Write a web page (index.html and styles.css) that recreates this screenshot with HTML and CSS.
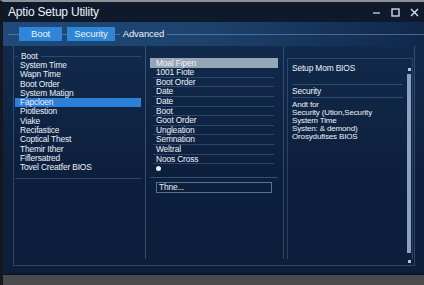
FILE: index.html
```html
<!DOCTYPE html>
<html lang="en">
<head>
    <meta charset="UTF-8">
    <title>Aptio Setup Utility</title>
    <link rel="stylesheet" href="styles.css">
</head>
<body>
    <div class="window">
        <div class="titlebar">
            <span class="title">Aptio Setup Utility</span>
            <div class="controls">
                <svg width="9" height="9" viewBox="0 0 9 9"><line x1="1" y1="5" x2="8" y2="5" stroke="#dfe6ee" stroke-width="1.2"/></svg>
                <svg width="9" height="9" viewBox="0 0 9 9"><rect x="1" y="1" width="7" height="7" fill="none" stroke="#dfe6ee" stroke-width="1.3"/></svg>
                <svg width="9" height="9" viewBox="0 0 9 9"><path d="M1 1 L8 8 M8 1 L1 8" stroke="#dfe6ee" stroke-width="1.3"/></svg>
            </div>
        </div>
        <div class="tabbar">
            <span class="tab active">Boot</span>
            <span class="tab active">Security</span>
            <span class="tab">Advanced</span>
        </div>
        <div class="main">
            <div class="frame">
                <div class="col left">
                    <div class="group">
                        <div class="legend">Boot</div>
                        <ul class="menu">
                            <li>System Time</li>
                            <li>Wapn Time</li>
                            <li>Boot Order</li>
                            <li>System Matign</li>
                            <li class="sel">Fapcloen</li>
                            <li>Piotlestion</li>
                            <li>Viake</li>
                            <li>Recifastice</li>
                            <li>Coptical Thest</li>
                            <li>Themir Ither</li>
                            <li>Fiflersatred</li>
                            <li>Tovel Creatfer BIOS</li>
                        </ul>
                    </div>
                </div>
                <div class="col middle">
                    <ul class="options">
                        <li class="sel">Moal Fipen</li>
                        <li>1001 Fiote</li>
                        <li>Boot Order</li>
                        <li>Date</li>
                        <li>Date</li>
                        <li>Boot</li>
                        <li>Goot Order</li>
                        <li>Ungleation</li>
                        <li>Semnation</li>
                        <li>Weltral</li>
                        <li>Noos Cross</li>
                        <li class="dot"><span></span></li>
                    </ul>
                    <div class="field">Thne...</div>
                </div>
                <div class="col right">
                    <div class="help">
                        <div class="help-body">
                            <div class="help-title">Setup Mom BIOS</div>
                            <div class="help-sec">Security</div>
                            <div class="help-text">
                                Andt for<br>
                                Security (Ution,Security<br>
                                System Time<br>
                                Systen: &amp; demond)<br>
                                Orosydufises BIOS
                            </div>
                        </div>
                        <div class="scroll"><span class="thumb"></span></div>
                    </div>
                </div>
            </div>
        </div>
        <div class="statusbar"></div>
    </div>
</body>
</html>
```
FILE: styles.css
```css
body { margin: 0; background: #4a4b4d; font-family: "Liberation Sans", Arial, sans-serif; color: #eef2f7; }
.window { width: 424px; height: 285px; display: flex; flex-direction: column; box-sizing: border-box; border-top: 2px solid #8d9094; border-left: 3px solid #15171b; }
.titlebar { height: 20px; background: #0e192b; display: flex; align-items: center; justify-content: space-between; padding: 0 5px 0 5px; flex-shrink: 0; }
.title { font-size: 12px; letter-spacing: -0.2px; }
.controls { display: flex; gap: 10px; }
.tabbar { height: 24px; flex-shrink: 0; display: flex; align-items: center; gap: 5px; padding-left: 16px; background: linear-gradient(90deg, #1f4a79 0%, #1c416c 50%, #10284a 100%); position: relative; }
.tabbar::before { content: ""; position: absolute; left: 5px; right: 0; top: 12px; border-top: 1px solid rgba(140, 175, 215, 0.45); }
.tab { position: relative; font-size: 9.5px; padding: 0 3px; height: 14px; line-height: 14px; background: #1d4572; letter-spacing: -0.1px; }
.tab.active { background: #2f86d8; padding: 0 7px; }
.tab:first-child { padding: 0 12px 0 12px; }
.main { flex: 1; background: linear-gradient(180deg, #112a4b 0%, #0c1f3c 60%, #0c1e3a 100%); padding: 0 9px 0 10px; display: flex; border-bottom: 1px solid #0a0f18; }
.frame { flex: 1; margin-bottom: 8px; border: 1px solid rgba(110, 145, 190, 0.35); border-top: none; display: grid; grid-template-columns: 132px 137px 1fr; padding-bottom: 6px; }
.col { font-size: 8.4px; letter-spacing: -0.15px; }
.left { border-right: 1px solid rgba(110, 145, 190, 0.4); padding: 10px 4px 0 1px; }
.group { border-top: 1px solid rgba(110, 145, 190, 0.3); border-bottom: 1px solid rgba(110, 145, 190, 0.35); padding-bottom: 5px; }
.legend { margin: -6px 0 0 3px; background: #112a4a; width: max-content; padding: 0 3px; line-height: 10px; }
.menu { list-style: none; margin: 0; padding: 0; }
.menu li { line-height: 9.3px; height: 9.3px; padding-left: 5px; }
.menu li.sel { background: #2d80d9; }
.middle { padding: 12px 5px 0 4px; }
.options { list-style: none; margin: 0; padding: 0 0 4px 0; border-bottom: 1px solid rgba(110, 145, 190, 0.4); }
.options li { height: 8.65px; line-height: 9px; margin: 0 4px 0 3px; padding-left: 3px; border-bottom: 1px solid rgba(110, 145, 190, 0.32); }
.options li.sel { background: #97a5b8; margin: 0; padding-left: 6px; border-bottom: none; height: 10px; line-height: 10px; }
.options li.dot { border-bottom: none; }
.options li.dot span { display: inline-block; width: 5px; height: 5px; border-radius: 50%; background: #e8edf3; }
.field { margin: 4px 6px 0 6px; height: 9px; line-height: 9px; padding-left: 2px; border: 1px solid rgba(140, 170, 205, 0.6); }
.right { border-left: 1px solid rgba(110, 145, 190, 0.35); padding: 12px 1px 0 3px; }
.help { height: 200px; border: 1px solid rgba(110, 145, 190, 0.3); border-bottom: none; display: flex; }
.help-body { flex: 1; padding: 4px 4px 0 4px; }
.help-title { height: 21px; line-height: 10px; border-bottom: 1px solid rgba(110, 145, 190, 0.35); }
.help-sec { height: 13px; line-height: 10px; padding-top: 1px; box-sizing: border-box; border-bottom: 1px solid rgba(110, 145, 190, 0.35); margin-bottom: 3px; }
.help-text { line-height: 8px; font-size: 8px; }
.scroll { width: 5px; position: relative; }
.scroll::before, .scroll::after { content: ""; position: absolute; left: 1px; width: 3px; height: 3px; background: #b6c3d6; }
.scroll::before { top: 9px; }
.scroll::after { bottom: -4px; }
.thumb { display: block; width: 4px; height: 179px; margin-top: 15px; background: #8da2c0; }
.statusbar { height: 10px; background: #4a4b4d; flex-shrink: 0; }
```
